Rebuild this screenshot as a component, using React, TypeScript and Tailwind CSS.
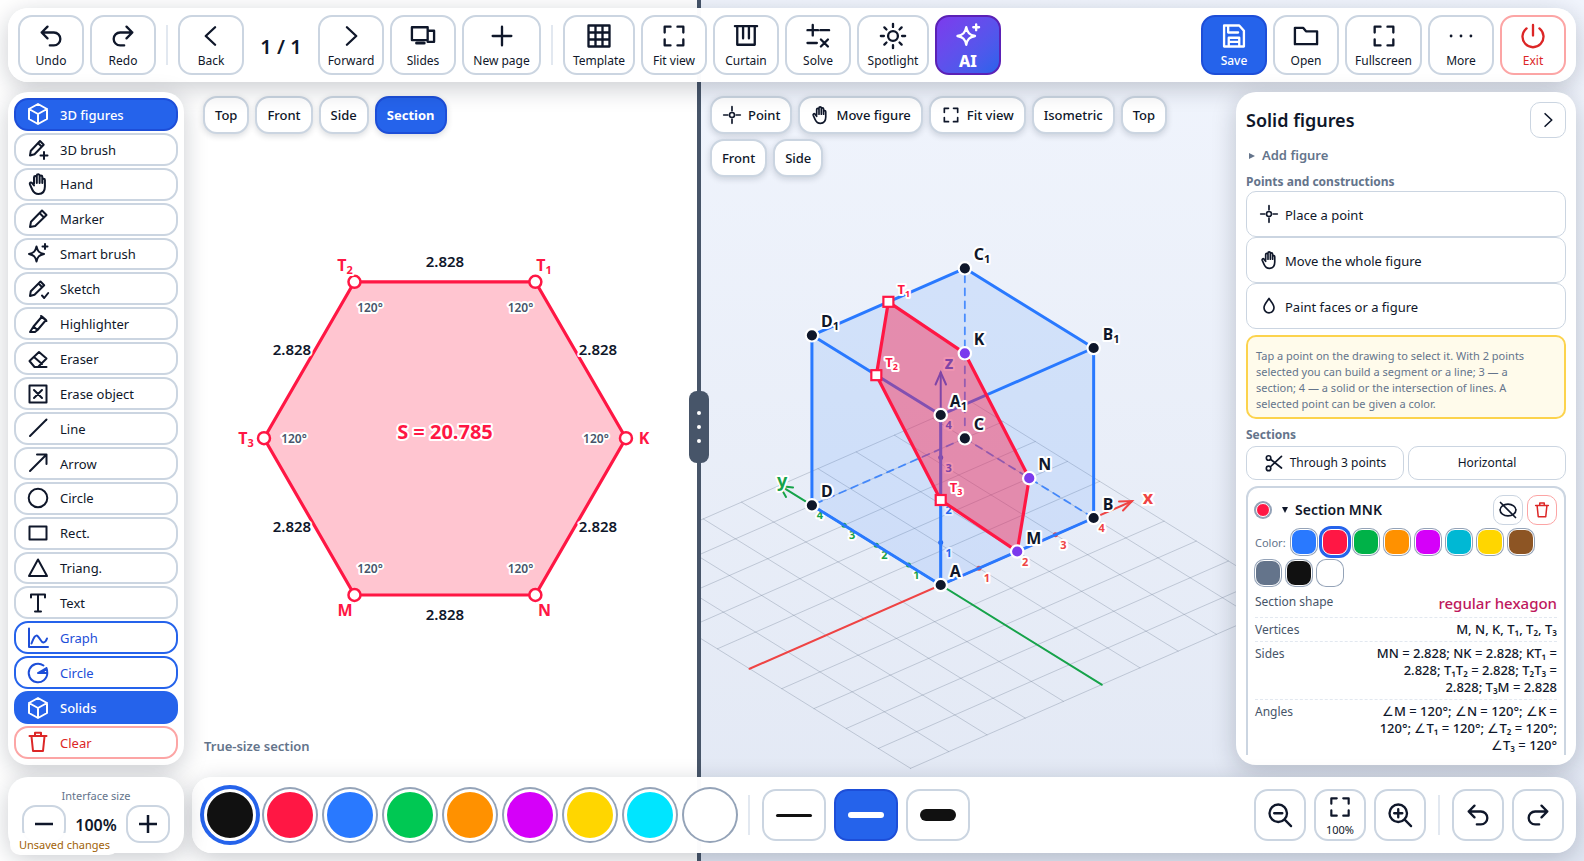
import type { ReactNode } from "react";

const icons: Record<string, ReactNode> = {
  undo: <path d="M9 14 4 9l5-5M4 9h10.5a5.5 5.5 0 0 1 0 11H11" />,
  redo: <path d="m15 14 5-5-5-5M20 9H9.5a5.5 5.5 0 0 0 0 11H13" />,
  back: <path d="m15.5 4.5-8 7.5 8 7.5" />,
  forward: <path d="m8.5 4.5 8 7.5-8 7.5" />,
  slides: (
    <>
      <path d="M2.5 4.5h13.5v11H2.5zM16 7.5h5.5v9.5H16" />
      <path d="M6.5 18h6.5" strokeWidth="2.6" />
    </>
  ),
  plus: <path d="M12 4v16M4 12h16" />,
  table: <path d="M3 3h18v18H3zM9 3v18M15 3v18M3 9h18M3 15h18" />,
  frame: <path d="M4 9V4h5M15 4h5v5M20 15v5h-5M9 20H4v-5" />,
  curtain: <path d="M2.5 3.5h19M4.5 3.5v16h15v-16M9.5 3.5v10.5M14.5 3.5v10.5" />,
  solve: <path d="M3 7h9M7.5 2.5v9M14 7h7.5M3 18h8M14.5 15l6 6M20.5 15l-6 6" />,
  sun: (
    <>
      <circle cx="12" cy="12" r="4.2" />
      <path d="M12 1.6v2.6M12 19.8v2.6M1.6 12h2.6M19.8 12h2.6M4.6 4.6l1.8 1.8M17.6 17.6l1.8 1.8M4.6 19.4l1.8-1.8M17.6 6.4l1.8-1.8" />
    </>
  ),
  sparkle: (
    <>
      <path d="M10.5 4.5c1 4.7 2.6 6.4 7.5 7.5-4.9 1.1-6.5 2.8-7.5 7.5-1-4.7-2.6-6.4-7.5-7.5 4.9-1.1 6.5-2.8 7.5-7.5z" />
      <path d="M19 2v5M16.5 4.5h5" />
    </>
  ),
  save: <path d="M3.5 3h13l4 4.5V21h-17zM7 3v6h8.5M7.5 21v-7.5h9V21M7.5 17h9" />,
  folder: <path d="M2.5 5h7l2.5 3h9.5v11h-19z" />,
  more: (
    <g fill="currentColor" stroke="none">
      <circle cx="3.5" cy="12" r="1.2" />
      <circle cx="12" cy="12" r="1.2" />
      <circle cx="20.5" cy="12" r="1.2" />
    </g>
  ),
  power: <path d="M12 2.5v9M6.5 5.5a9 9 0 1 0 11 0" />,
  cube: <path d="M12 2l9 5v10l-9 5-9-5V7zM3 7l9 5 9-5M12 12v10" />,
  penPlus: (
    <>
      <path d="m4 18.5.8-4.8L14 4l3.7 3.7-9.2 9.5zM12 6l3.7 3.7" />
      <path d="M18 15v7M14.5 18.5h7" />
    </>
  ),
  hand: (
    <path d="M8 12V5.5a1.4 1.4 0 0 1 2.8 0V11M10.8 10V3.6a1.4 1.4 0 0 1 2.8 0V11M13.6 10.5V4.8a1.3 1.3 0 0 1 2.7 0V11M16.3 8a1.3 1.3 0 0 1 2.6 0v6.5c0 4.5-2.3 7.5-6.4 7.5-3.7 0-5-1.7-6.3-4.5L3.9 12.4c-.6-1.6 1-2.6 2.1-1.4L8 13.5" />
  ),
  pen: <path d="m4 20 1-5.2L16 3.5l4.5 4.5L9.2 19zM13.5 6l4.5 4.5" />,
  penCheck: (
    <>
      <path d="m4 19 .8-4.8L14.5 4.5l3.7 3.7L8.5 17.7zM12.5 6.5l3.7 3.7" />
      <path d="m16 18.5 2.2 2.5 4-5" />
    </>
  ),
  highlighter: <path d="M4 20l3.5-5.5L16 4.5l4 3.5-8.5 10L9 20zM7.5 14.5l4 3.5M15 4l5.5 5" />,
  eraser: <path d="M3.5 14 13 5l7.5 6.5-8.5 8.5H8.5zM8 10l8 7M9 20h11.5" />,
  eraseObject: <path d="M3.5 3.5h17v17h-17zM8 8l8 8M16 8l-8 8" />,
  line: <path d="M4 20 20.5 3.5" />,
  arrow: <path d="M4 20 20.5 3.5M11 3.5h9.5V13" />,
  circle: <circle cx="12" cy="12" r="9.3" />,
  rect: <path d="M3.5 5.5h17v13h-17z" />,
  triangle: <path d="M12 3.5 21 20H3z" />,
  text: <path d="M5 6.5V3.5h14v3M12 3.5V20.5M9 20.5h6" />,
  graph: <path d="M3 2.5V21h19M5.5 17.5C8 11 9.5 8 12 10.5s3.5 6.5 5.5 6 3-2.500 3.500-4" />,
  sector: <path d="M21.3 12A9.3 9.3 0 1 1 17.5 4.5M12 12l8.5-5M12 12h9.3M20 7.3 16.5 12M20.5 7c.6 1.5.8 3 .8 5" />,
  trash: <path d="M3.5 6h17M9 6V2.8h6V6M5.5 6.5 7 21h10l1.5-14.5" />,
  point: (
    <>
      <circle cx="12" cy="12" r="3" />
      <path d="M12 2v5M12 17v5M2 12h5M17 12h5" />
    </>
  ),
  drop: <path d="M12 3c3 4.3 6 7.2 6 11.2a6 6 0 0 1-12 0C6 10.2 9 7.3 12 3z" />,
  scissors: (
    <>
      <circle cx="5.5" cy="6" r="2.7" />
      <circle cx="5.5" cy="18.5" r="2.7" />
      <path d="M7.8 7.5 21 18M7.8 16.5 21 4" />
    </>
  ),
  eyeOff: (
    <>
      <ellipse cx="12" cy="12" rx="9.5" ry="7" />
      <path d="M3 3l18 18" />
    </>
  ),
  zoomOut: (
    <>
      <circle cx="10.5" cy="10.5" r="7.5" />
      <path d="m16 16 5.5 5.5M7 10.5h7" />
    </>
  ),
  zoomIn: (
    <>
      <circle cx="10.5" cy="10.5" r="7.5" />
      <path d="m16 16 5.5 5.5M7 10.5h7M10.5 7v7" />
    </>
  ),
};

function Icon({ name, className = "size-6" }: { name: string; className?: string }) {
  return (
    <svg
      viewBox="0 0 24 24"
      className={`${className} shrink-0`}
      fill="none"
      stroke="currentColor"
      strokeWidth="2"
      strokeLinecap="round"
      strokeLinejoin="round"
      aria-hidden="true"
    >
      {icons[name]}
    </svg>
  );
}

type Tone = "plain" | "primary" | "ai" | "danger";

const toolTones: Record<Tone, string> = {
  plain: "border-[#cbd5e1] bg-white text-[#0f172a]",
  primary: "border-[#1d4ed8] bg-[#2563eb] text-white font-medium",
  ai: "border-[#5b21b6] bg-linear-to-br from-[#7c3aed] to-[#2563eb] text-white font-extrabold",
  danger: "border-[#fca5a5] bg-white text-[#dc2626]",
};

function ToolButton({
  icon,
  label,
  tone = "plain",
  width = "w-[66px]",
}: {
  icon: string;
  label: string;
  tone?: Tone;
  width?: string;
}) {
  return (
    <button
      type="button"
      className={`flex h-[60px] shrink-0 flex-col items-center justify-center rounded-[14px] border-2 pt-1 ${width} ${toolTones[tone]}`}
    >
      <Icon name={icon} className="size-7" />
      <span className={`whitespace-nowrap leading-[22px] ${tone === "ai" ? "text-base" : "text-xs"}`}>{label}</span>
    </button>
  );
}

function Divider() {
  return <span className="mx-1 h-10 w-0.5 shrink-0 bg-[#e2e8f0]" />;
}

function TopBar() {
  return (
    <header className="pointer-events-auto flex h-[74px] shrink-0 items-center gap-1.5 rounded-[20px] bg-white/98 px-2.5 shadow-[0_6px_24px_rgba(15,23,42,0.22)]">
      <ToolButton icon="undo" label="Undo" />
      <ToolButton icon="redo" label="Redo" />
      <Divider />
      <ToolButton icon="back" label="Back" />
      <span className="w-[62px] pt-1 text-center text-xl leading-7 font-semibold">1 / 1</span>
      <ToolButton icon="forward" label="Forward" />
      <ToolButton icon="slides" label="Slides" />
      <ToolButton icon="plus" label="New page" width="w-[79px]" />
      <Divider />
      <ToolButton icon="table" label="Template" width="w-[72px]" />
      <ToolButton icon="frame" label="Fit view" />
      <ToolButton icon="curtain" label="Curtain" />
      <ToolButton icon="solve" label="Solve" />
      <ToolButton icon="sun" label="Spotlight" width="w-[72px]" />
      <ToolButton icon="sparkle" label="AI" tone="ai" />
      <span className="flex-1" />
      <ToolButton icon="save" label="Save" tone="primary" />
      <ToolButton icon="folder" label="Open" />
      <ToolButton icon="frame" label="Fullscreen" width="w-[77px]" />
      <ToolButton icon="more" label="More" />
      <ToolButton icon="power" label="Exit" tone="danger" />
    </header>
  );
}

const sideTones = {
  plain: "border-[#cbd5e1] bg-white text-[#0f172a]",
  active: "border-[#1d4ed8] bg-[#2563eb] font-medium text-white",
  solid: "border-[#2563eb] bg-[#2563eb] font-medium text-white",
  outline: "border-[#2563eb] bg-white text-[#1d4ed8]",
  danger: "border-[#fca5a5] bg-white text-[#dc2626]",
};

const sideTools: [string, string, keyof typeof sideTones][] = [
  ["cube", "3D figures", "active"],
  ["penPlus", "3D brush", "plain"],
  ["hand", "Hand", "plain"],
  ["pen", "Marker", "plain"],
  ["sparkle", "Smart brush", "plain"],
  ["penCheck", "Sketch", "plain"],
  ["highlighter", "Highlighter", "plain"],
  ["eraser", "Eraser", "plain"],
  ["eraseObject", "Erase object", "plain"],
  ["line", "Line", "plain"],
  ["arrow", "Arrow", "plain"],
  ["circle", "Circle", "plain"],
  ["rect", "Rect.", "plain"],
  ["triangle", "Triang.", "plain"],
  ["text", "Text", "plain"],
  ["graph", "Graph", "outline"],
  ["sector", "Circle", "outline"],
  ["cube", "Solids", "solid"],
  ["trash", "Clear", "danger"],
];

function SideBar() {
  return (
    <nav className="pointer-events-auto flex w-44 shrink-0 flex-col gap-0.5 rounded-[20px] bg-white p-1.5 shadow-[0_6px_24px_rgba(15,23,42,0.22)]">
      {sideTools.map(([icon, label, tone]) => (
        <button
          key={icon + label}
          type="button"
          className={`flex min-h-0 flex-1 items-center gap-2.5 rounded-[14px] border-2 px-2.5 text-[13px] ${sideTones[tone]}`}
        >
          <Icon name={icon} />
          <span className="pt-0.5">{label}</span>
        </button>
      ))}
    </nav>
  );
}

function ViewTab({ label, icon, active = false }: { label: string; icon?: string; active?: boolean }) {
  return (
    <button
      type="button"
      className={`flex h-[38px] items-center gap-1.5 rounded-[14px] border-2 px-2.5 text-[13px] shadow-[0_2px_6px_rgba(15,23,42,0.16)] ${
        active ? "border-[#1d4ed8] bg-[#2563eb] font-bold text-white" : "border-[#cbd5e1] bg-white font-medium text-[#0f172a]"
      }`}
    >
      {icon && <Icon name={icon} className="size-5" />}
      <span className="pt-0.5">{label}</span>
    </button>
  );
}

function Label({
  x,
  y,
  size,
  color,
  children,
  sub,
  anchor = "start",
  weight = 700,
}: {
  x: number;
  y: number;
  size: number;
  color: string;
  children: ReactNode;
  sub?: string;
  anchor?: "start" | "middle" | "end";
  weight?: number;
}) {
  return (
    <text
      x={x}
      y={y}
      fontSize={size}
      fontWeight={weight}
      fill={color}
      textAnchor={anchor}
      stroke="#ffffff"
      strokeWidth="4"
      strokeLinejoin="round"
      paintOrder="stroke"
    >
      {children}
      {sub && (
        <tspan dy="3" fontSize={Math.round(size * 0.68)}>
          {sub}
        </tspan>
      )}
    </text>
  );
}

const hexagon: { name: string; sub?: string; p: [number, number]; label: [number, number]; angle: [number, number] }[] = [
  { name: "T", sub: "2", p: [354.5, 281.8], label: [345, 271], angle: [370, 312] },
  { name: "T", sub: "1", p: [535.4, 281.8], label: [544, 271], angle: [520.5, 312] },
  { name: "K", p: [626, 438.2], label: [644, 444], angle: [596, 443] },
  { name: "N", p: [535.4, 595], label: [544.5, 616], angle: [520.5, 573] },
  { name: "M", p: [354.5, 595], label: [345, 616], angle: [370, 573] },
  { name: "T", sub: "3", p: [264, 438.2], label: [246, 444], angle: [294, 443] },
];

const sideLabels: [number, number][] = [
  [445, 267],
  [598, 355],
  [598, 532],
  [445, 620],
  [292, 532],
  [292, 355],
];

function SectionDrawing() {
  return (
    <svg viewBox="0 0 697 861" className="absolute inset-0 size-full" role="img" aria-label="True-size section">
      <polygon
        points={hexagon.map((v) => v.p.join(",")).join(" ")}
        fill="#ff1744"
        fillOpacity="0.25"
        stroke="#ff1744"
        strokeWidth="3.2"
        strokeLinejoin="round"
      />
      {sideLabels.map(([x, y]) => (
        <Label key={`${x}-${y}`} x={x} y={y} size={15} color="#0f172a" anchor="middle" weight={600}>
          2.828
        </Label>
      ))}
      {hexagon.map((v) => (
        <g key={v.p.join()}>
          <circle cx={v.p[0]} cy={v.p[1]} r="6" fill="#ffffff" stroke="#ff1744" strokeWidth="2.5" />
          <Label x={v.label[0]} y={v.label[1]} size={16} color="#ff1744" anchor="middle" sub={v.sub}>
            {v.name}
          </Label>
          <Label x={v.angle[0]} y={v.angle[1]} size={12} color="#475569" anchor="middle" weight={600}>
            120°
          </Label>
        </g>
      ))}
      <Label x={445} y={439} size={20} color="#ff1744" anchor="middle">
        S = 20.785
      </Label>
    </svg>
  );
}

/** Axonometric projection of a point in cube units. */
function project(x: number, y: number, z: number): [number, number] {
  return [940.7 + 38.23 * x - 32.2 * y, 585 - 16.75 * x - 19.92 * y - 42.5 * z];
}

type Vec = [number, number, number];

function Seg({ a, b, ...rest }: { a: Vec; b: Vec; stroke: string; strokeWidth: number; strokeDasharray?: string; opacity?: number }) {
  const [x1, y1] = project(...a);
  const [x2, y2] = project(...b);
  return <line x1={x1} y1={y1} x2={x2} y2={y2} strokeLinecap="round" {...rest} />;
}

const toPoints = (list: Vec[]) => list.map((v) => project(...v).join(",")).join(" ");

const gridLines = [-5, -4, -3, -2, -1, 0, 1, 2, 3, 4, 5];
const ticks = [1, 2, 3, 4];
const silhouette: Vec[] = [[0, 0, 0], [4, 0, 0], [4, 0, 4], [4, 4, 4], [0, 4, 4], [0, 4, 0]];
const sectionPath: Vec[] = [[2, 0, 0], [4, 2, 0], [4, 4, 2], [2, 4, 4], [0, 2, 4], [0, 0, 2]];
const visibleEdges: [Vec, Vec][] = [
  [[0, 0, 0], [4, 0, 0]],
  [[0, 0, 0], [0, 4, 0]],
  [[0, 0, 0], [0, 0, 4]],
  [[4, 0, 0], [4, 0, 4]],
  [[0, 4, 0], [0, 4, 4]],
  [[0, 0, 4], [4, 0, 4]],
  [[0, 0, 4], [0, 4, 4]],
  [[4, 0, 4], [4, 4, 4]],
  [[0, 4, 4], [4, 4, 4]],
];
const hiddenEdges: [Vec, Vec][] = [
  [[4, 4, 0], [4, 4, 4]],
  [[4, 4, 0], [0, 4, 0]],
  [[4, 4, 0], [4, 0, 0]],
];
const vertices: { name: string; sub?: string; at: Vec; kind: "vertex" | "picked" | "cut" }[] = [
  { name: "A", at: [0, 0, 0], kind: "vertex" },
  { name: "B", at: [4, 0, 0], kind: "vertex" },
  { name: "C", at: [4, 4, 0], kind: "vertex" },
  { name: "D", at: [0, 4, 0], kind: "vertex" },
  { name: "A", sub: "1", at: [0, 0, 4], kind: "vertex" },
  { name: "B", sub: "1", at: [4, 0, 4], kind: "vertex" },
  { name: "C", sub: "1", at: [4, 4, 4], kind: "vertex" },
  { name: "D", sub: "1", at: [0, 4, 4], kind: "vertex" },
  { name: "M", at: [2, 0, 0], kind: "picked" },
  { name: "N", at: [4, 2, 0], kind: "picked" },
  { name: "K", at: [4, 4, 2], kind: "picked" },
  { name: "T", sub: "1", at: [2, 4, 4], kind: "cut" },
  { name: "T", sub: "2", at: [0, 2, 4], kind: "cut" },
  { name: "T", sub: "3", at: [0, 0, 2], kind: "cut" },
];
const axes: { color: string; at: (k: number) => Vec }[] = [
  { color: "#ef4444", at: (k) => [k, 0, 0] },
  { color: "#16a34a", at: (k) => [0, k, 0] },
  { color: "#2563eb", at: (k) => [0, 0, k] },
];

function SolidDrawing() {
  return (
    <svg viewBox="701 0 883 861" className="absolute inset-0 size-full" role="img" aria-label="Cube with section MNK">
      {gridLines.map((k) => (
        <g key={k}>
          <Seg a={[k, -5, 0]} b={[k, 5, 0]} stroke="#64748b" strokeWidth={1} opacity={0.3} />
          <Seg a={[-5, k, 0]} b={[5, k, 0]} stroke="#64748b" strokeWidth={1} opacity={0.3} />
        </g>
      ))}
      <Seg a={[-5, 0, 0]} b={[5, 0, 0]} stroke="#ef4444" strokeWidth={2} />
      <Seg a={[0, -5, 0]} b={[0, 5, 0]} stroke="#16a34a" strokeWidth={2} />
      <Seg a={[0, 0, 0]} b={[0, 0, 5]} stroke="#2563eb" strokeWidth={2} />
      <g fill="none" strokeWidth="2" strokeLinecap="round">
        <path d="M1119 501.5 1132 501 1123 510.5" stroke="#ef4444" />
        <path d="M793 487.5 779.7 486 786 497" stroke="#16a34a" />
        <path d="M935.5 384.5 940.7 372.5 946 384.5" stroke="#2563eb" />
      </g>
      <Label x={1148} y={504} size={18} color="#ef4444" anchor="middle">x</Label>
      <Label x={782} y={487} size={18} color="#16a34a" anchor="middle">y</Label>
      <Label x={949} y={369} size={18} color="#2563eb" anchor="middle">z</Label>
      {axes.map(({ color, at }) =>
        ticks.map((k) => {
          const [x, y] = project(...at(k));
          return (
            <g key={color + k}>
              <circle cx={x} cy={y} r="2.5" fill={color} />
              <Label x={x + 8} y={y + 14} size={11} color={color} anchor="middle" weight={700}>
                {k}
              </Label>
            </g>
          );
        }),
      )}
      <polygon points={toPoints(silhouette)} fill="#2979ff" fillOpacity="0.13" />
      {hiddenEdges.map(([a, b], i) => (
        <Seg key={i} a={a} b={b} stroke="#2979ff" strokeWidth={1.8} strokeDasharray="7 6" opacity={0.8} />
      ))}
      {visibleEdges.map(([a, b], i) => (
        <Seg key={i} a={a} b={b} stroke="#2979ff" strokeWidth={3} />
      ))}
      <polygon
        points={toPoints(sectionPath)}
        fill="#ff1744"
        fillOpacity="0.42"
        stroke="#ff1744"
        strokeWidth="3.2"
        strokeLinejoin="round"
      />
      {vertices.map((v) => {
        const [x, y] = project(...v.at);
        const cut = v.kind === "cut";
        return (
          <g key={v.name + v.sub}>
            {cut ? (
              <rect x={x - 5} y={y - 5} width="10" height="10" fill="#ffffff" stroke="#ff1744" strokeWidth="2.2" />
            ) : (
              <circle
                cx={x}
                cy={y}
                r="6.2"
                fill={v.kind === "picked" ? "#7c3aed" : "#0f172a"}
                stroke="#ffffff"
                strokeWidth="2.2"
              />
            )}
            <Label x={x + 9} y={y - 8} size={cut ? 13 : 16} color={cut ? "#ff1744" : "#0f172a"} sub={v.sub}>
              {v.name}
            </Label>
          </g>
        );
      })}
    </svg>
  );
}

function Canvas() {
  return (
    <main className="absolute inset-0 flex">
      <section className="relative flex w-[44%] shrink-0 flex-col overflow-hidden bg-white pt-24 pb-[105px] pl-[203px]">
        <SectionDrawing />
        <div className="relative flex gap-1.5">
          <ViewTab label="Top" />
          <ViewTab label="Front" />
          <ViewTab label="Side" />
          <ViewTab label="Section" active />
        </div>
        <p className="relative mt-auto pl-px text-[13px] leading-5 font-semibold text-[#64748b]">True-size section</p>
      </section>
      <div className="relative w-1 shrink-0 bg-[#475569]">
        <button
          type="button"
          aria-label="Resize views"
          className="absolute top-[391px] -left-2 z-10 flex h-[72px] w-5 flex-col items-center justify-center gap-2.5 rounded-lg bg-[#475569]"
        >
          <i className="size-1 rounded-full bg-white" />
          <i className="size-1 rounded-full bg-white" />
          <i className="size-1 rounded-full bg-white" />
        </button>
      </div>
      <section className="relative flex-1 overflow-hidden bg-linear-to-b from-[#f1f5fd] to-[#e2e8f4] pt-24 pr-[380px] pl-[9px]">
        <SolidDrawing />
        <div className="relative flex flex-wrap gap-x-1.5 gap-y-[5px]">
          <ViewTab icon="point" label="Point" />
          <ViewTab icon="hand" label="Move figure" />
          <ViewTab icon="frame" label="Fit view" />
          <ViewTab label="Isometric" />
          <ViewTab label="Top" />
          <ViewTab label="Front" />
          <ViewTab label="Side" />
        </div>
      </section>
    </main>
  );
}

const swatches: [string, string][] = [
  ["Blue", "bg-[#2979ff]"],
  ["Red", "bg-[#ff1744]"],
  ["Green", "bg-[#00b248]"],
  ["Orange", "bg-[#ff9100]"],
  ["Magenta", "bg-[#d500f9]"],
  ["Teal", "bg-[#00b8d4]"],
  ["Yellow", "bg-[#ffd600]"],
  ["Brown", "bg-[#8d5524]"],
  ["Slate", "bg-[#64748b]"],
  ["Black", "bg-[#111111]"],
  ["White", "bg-white"],
];

const facts: [string, string][] = [
  ["Vertices", "M, N, K, T₁, T₂, T₃"],
  ["Sides", "MN = 2.828; NK = 2.828; KT₁ = 2.828; T₁T₂ = 2.828; T₂T₃ = 2.828; T₃M = 2.828"],
  ["Angles", "∠M = 120°; ∠N = 120°; ∠K = 120°; ∠T₁ = 120°; ∠T₂ = 120°; ∠T₃ = 120°"],
];

function PanelRow({ icon, label }: { icon: string; label: string }) {
  return (
    <button
      type="button"
      className="flex h-[46px] w-full items-center gap-1.5 rounded-[10px] border border-[#cbd5e1] px-3 text-[13px]"
    >
      <Icon name={icon} className="size-5" />
      <span className="pt-[3px]">{label}</span>
    </button>
  );
}

function FiguresPanel() {
  return (
    <aside className="pointer-events-auto w-[340px] shrink-0 rounded-[20px] bg-white p-2.5 shadow-[0_6px_24px_rgba(15,23,42,0.22)]">
      <div className="h-full overflow-hidden">
        <div className="flex h-9 items-center justify-between">
          <h2 className="text-lg font-semibold">Solid figures</h2>
          <button
            type="button"
            aria-label="Collapse panel"
            className="flex size-9 items-center justify-center rounded-[10px] border border-[#cbd5e1]"
          >
            <Icon name="forward" className="size-5" />
          </button>
        </div>
        <button type="button" className="mt-2 flex h-5 items-center pl-[3px] text-[13px] font-semibold text-[#64748b]">
          <svg viewBox="0 0 6 6" className="mr-[7px] size-1.5" aria-hidden="true">
            <path d="M0 0l6 3-6 3z" fill="currentColor" />
          </svg>
          Add figure
        </button>
        <h3 className="mt-1.5 h-[19px] text-xs leading-[19px] font-bold text-[#64748b]">Points and constructions</h3>
        <div className="flex flex-col">
          <PanelRow icon="point" label="Place a point" />
          <PanelRow icon="hand" label="Move the whole figure" />
          <PanelRow icon="drop" label="Paint faces or a figure" />
        </div>
        <p className="mt-1.5 rounded-[10px] border-2 border-[#fcd34d] bg-[#fffbeb] pt-[11px] pr-5 pb-[5px] pl-2 text-[11px] leading-4 text-[#64748b]">
          Tap a point on the drawing to select it. With 2 points selected you can build a segment or a line; 3 — a
          section; 4 — a solid or the intersection of lines. A selected point can be given a color.
        </p>
        <h3 className="mt-1.5 h-[21px] text-xs leading-[19px] font-bold text-[#64748b]">Sections</h3>
        <div className="flex gap-1">
          <button
            type="button"
            className="flex h-[34px] flex-1 items-center justify-center gap-1.5 rounded-[10px] border border-[#cbd5e1] text-xs"
          >
            <Icon name="scissors" className="size-5" />
            Through 3 points
          </button>
          <button
            type="button"
            className="flex h-[34px] flex-1 items-center justify-center rounded-[10px] border border-[#cbd5e1] text-xs"
          >
            Horizontal
          </button>
        </div>
        <div className="mt-1.5 rounded-xl border-2 border-[#cbd5e1] px-[7px] pt-[7px] pb-4">
          <div className="flex h-[30px] items-center">
            <button
              type="button"
              aria-label="Section color"
              className="ml-px size-3.5 rounded-full border border-white bg-[#ff1744] ring-2 ring-[#94a3b8]"
            />
            <button type="button" className="ml-3 flex flex-1 items-center gap-[7px] text-sm font-semibold">
              <svg viewBox="0 0 6 6" className="size-1.5" aria-hidden="true">
                <path d="M0 0h6L3 6z" fill="currentColor" />
              </svg>
              Section MNK
            </button>
            <button
              type="button"
              aria-label="Hide section"
              className="mr-1 flex size-[30px] items-center justify-center rounded-[10px] border border-[#cbd5e1]"
            >
              <Icon name="eyeOff" className="size-5" />
            </button>
            <button
              type="button"
              aria-label="Delete section"
              className="flex size-[30px] items-center justify-center rounded-[10px] border border-[#fca5a5] text-[#dc2626]"
            >
              <Icon name="trash" className="size-[18px]" />
            </button>
          </div>
          <div className="mt-1 flex flex-wrap items-center gap-[5px]">
            <span className="w-[31px] pt-0.5 text-[11px] text-[#64748b]">Color:</span>
            {swatches.map(([name, fill]) => (
              <button
                key={name}
                type="button"
                aria-label={name}
                className={`size-[26px] rounded-[9px] border border-white ${fill} ${
                  name === "Red" ? "ring-3 ring-[#2563eb]" : "ring-[1px] ring-[#94a3b8]"
                }`}
              />
            ))}
          </div>
          <dl className="mt-1 text-xs">
            <div className="flex justify-between border-b border-dashed border-[#e2e8f0] pt-0.5 pb-[3px]">
              <dt className="leading-5 text-[#475569]">Section shape</dt>
              <dd className="text-[15px] leading-[22px] font-medium text-[#be185d]">regular hexagon</dd>
            </div>
            {facts.map(([term, value]) => (
              <div key={term} className="flex justify-between gap-3 border-b border-dashed border-[#e2e8f0] py-[3px]">
                <dt className="leading-[17px] text-[#475569]">{term}</dt>
                <dd className="max-w-[188px] text-right text-[13px] leading-[17px] font-medium text-[#0f172a]">{value}</dd>
              </div>
            ))}
          </dl>
        </div>
      </div>
    </aside>
  );
}

const palette: [string, string][] = [
  ["Black", "bg-[#111111]"],
  ["Red", "bg-[#ff1744]"],
  ["Blue", "bg-[#2979ff]"],
  ["Green", "bg-[#00c853]"],
  ["Orange", "bg-[#ff9100]"],
  ["Magenta", "bg-[#d500f9]"],
  ["Yellow", "bg-[#ffd600]"],
  ["Cyan", "bg-[#00e5ff]"],
  ["White", "bg-white"],
];

function SquareButton({ label, icon, caption }: { label: string; icon: string; caption?: string }) {
  return (
    <button
      type="button"
      aria-label={label}
      className="flex size-[52px] shrink-0 flex-col items-center justify-center rounded-[14px] border-2 border-[#cbd5e1] bg-white"
    >
      <Icon name={icon} className={caption ? "mt-0.5 size-[26px]" : "size-7"} />
      {caption && <span className="pt-0.5 text-[11px] leading-4">{caption}</span>}
    </button>
  );
}

const strokes: [string, string, boolean][] = [
  ["Thin", "h-[3px]", false],
  ["Medium", "h-1.5", true],
  ["Thick", "h-3", false],
];

function BottomBar() {
  return (
    <footer className="pointer-events-auto flex flex-1 items-center gap-2 rounded-[20px] bg-white/98 px-3 shadow-[0_6px_24px_rgba(15,23,42,0.22)]">
      {palette.map(([name, fill], i) => (
        <button
          key={name}
          type="button"
          aria-label={name}
          className={`size-[52px] shrink-0 rounded-full border-3 border-white ${fill} ${
            i === 0 ? "ring-4 ring-[#2563eb]" : "ring-2 ring-[#94a3b8]"
          }`}
        />
      ))}
      <Divider />
      {strokes.map(([name, height, active]) => (
        <button
          key={name}
          type="button"
          aria-label={name}
          className={`flex h-[52px] w-16 shrink-0 items-center justify-center rounded-[14px] border-2 ${
            active ? "border-[#1d4ed8] bg-[#2563eb]" : "border-[#cbd5e1] bg-white"
          }`}
        >
          <span className={`w-9 rounded-full ${height} ${active ? "bg-white" : "bg-[#111111]"}`} />
        </button>
      ))}
      <span className="flex-1" />
      <SquareButton label="Zoom out" icon="zoomOut" />
      <SquareButton label="Reset zoom" icon="frame" caption="100%" />
      <SquareButton label="Zoom in" icon="zoomIn" />
      <Divider />
      <SquareButton label="Undo" icon="undo" />
      <SquareButton label="Redo" icon="redo" />
    </footer>
  );
}

function SizeBox() {
  return (
    <div className="pointer-events-auto relative flex w-44 shrink-0 flex-col items-center rounded-[20px] bg-white pt-2.5 shadow-[0_6px_24px_rgba(15,23,42,0.22)]">
      <span className="text-[11px] leading-[18px] text-[#64748b]">Interface size</span>
      <div className="flex items-center">
        <button
          type="button"
          aria-label="Smaller"
          className="flex h-[38px] w-11 items-center justify-center rounded-[14px] border-2 border-[#cbd5e1]"
        >
          <svg viewBox="0 0 20 20" className="size-5" stroke="currentColor" strokeWidth="2.5" aria-hidden="true">
            <path d="M1 10h18" />
          </svg>
        </button>
        <span className="w-[60px] pt-0.5 text-center text-base font-semibold">100%</span>
        <button
          type="button"
          aria-label="Larger"
          className="flex h-[38px] w-11 items-center justify-center rounded-[14px] border-2 border-[#cbd5e1]"
        >
          <svg viewBox="0 0 20 20" className="size-5" stroke="currentColor" strokeWidth="2.5" aria-hidden="true">
            <path d="M1 10h18M10 1v18" />
          </svg>
        </button>
      </div>
      <span className="absolute -bottom-0.5 left-0.5 rounded-[10px] bg-white/95 px-[9px] pt-1 pb-0.5 text-[11px] leading-4 text-[#a16207]">
        Unsaved changes
      </span>
    </div>
  );
}

export default function App() {
  return (
    <div className="relative h-screen overflow-hidden bg-white font-['Noto_Sans',sans-serif] text-[#0f172a]">
      <Canvas />
      <div className="pointer-events-none relative flex h-full flex-col p-2">
        <TopBar />
        <div className="mt-2.5 flex min-h-0 flex-1 justify-between">
          <SideBar />
          <FiguresPanel />
        </div>
        <div className="mt-3 flex h-[76px] shrink-0 gap-2">
          <SizeBox />
          <BottomBar />
        </div>
      </div>
    </div>
  );
}
